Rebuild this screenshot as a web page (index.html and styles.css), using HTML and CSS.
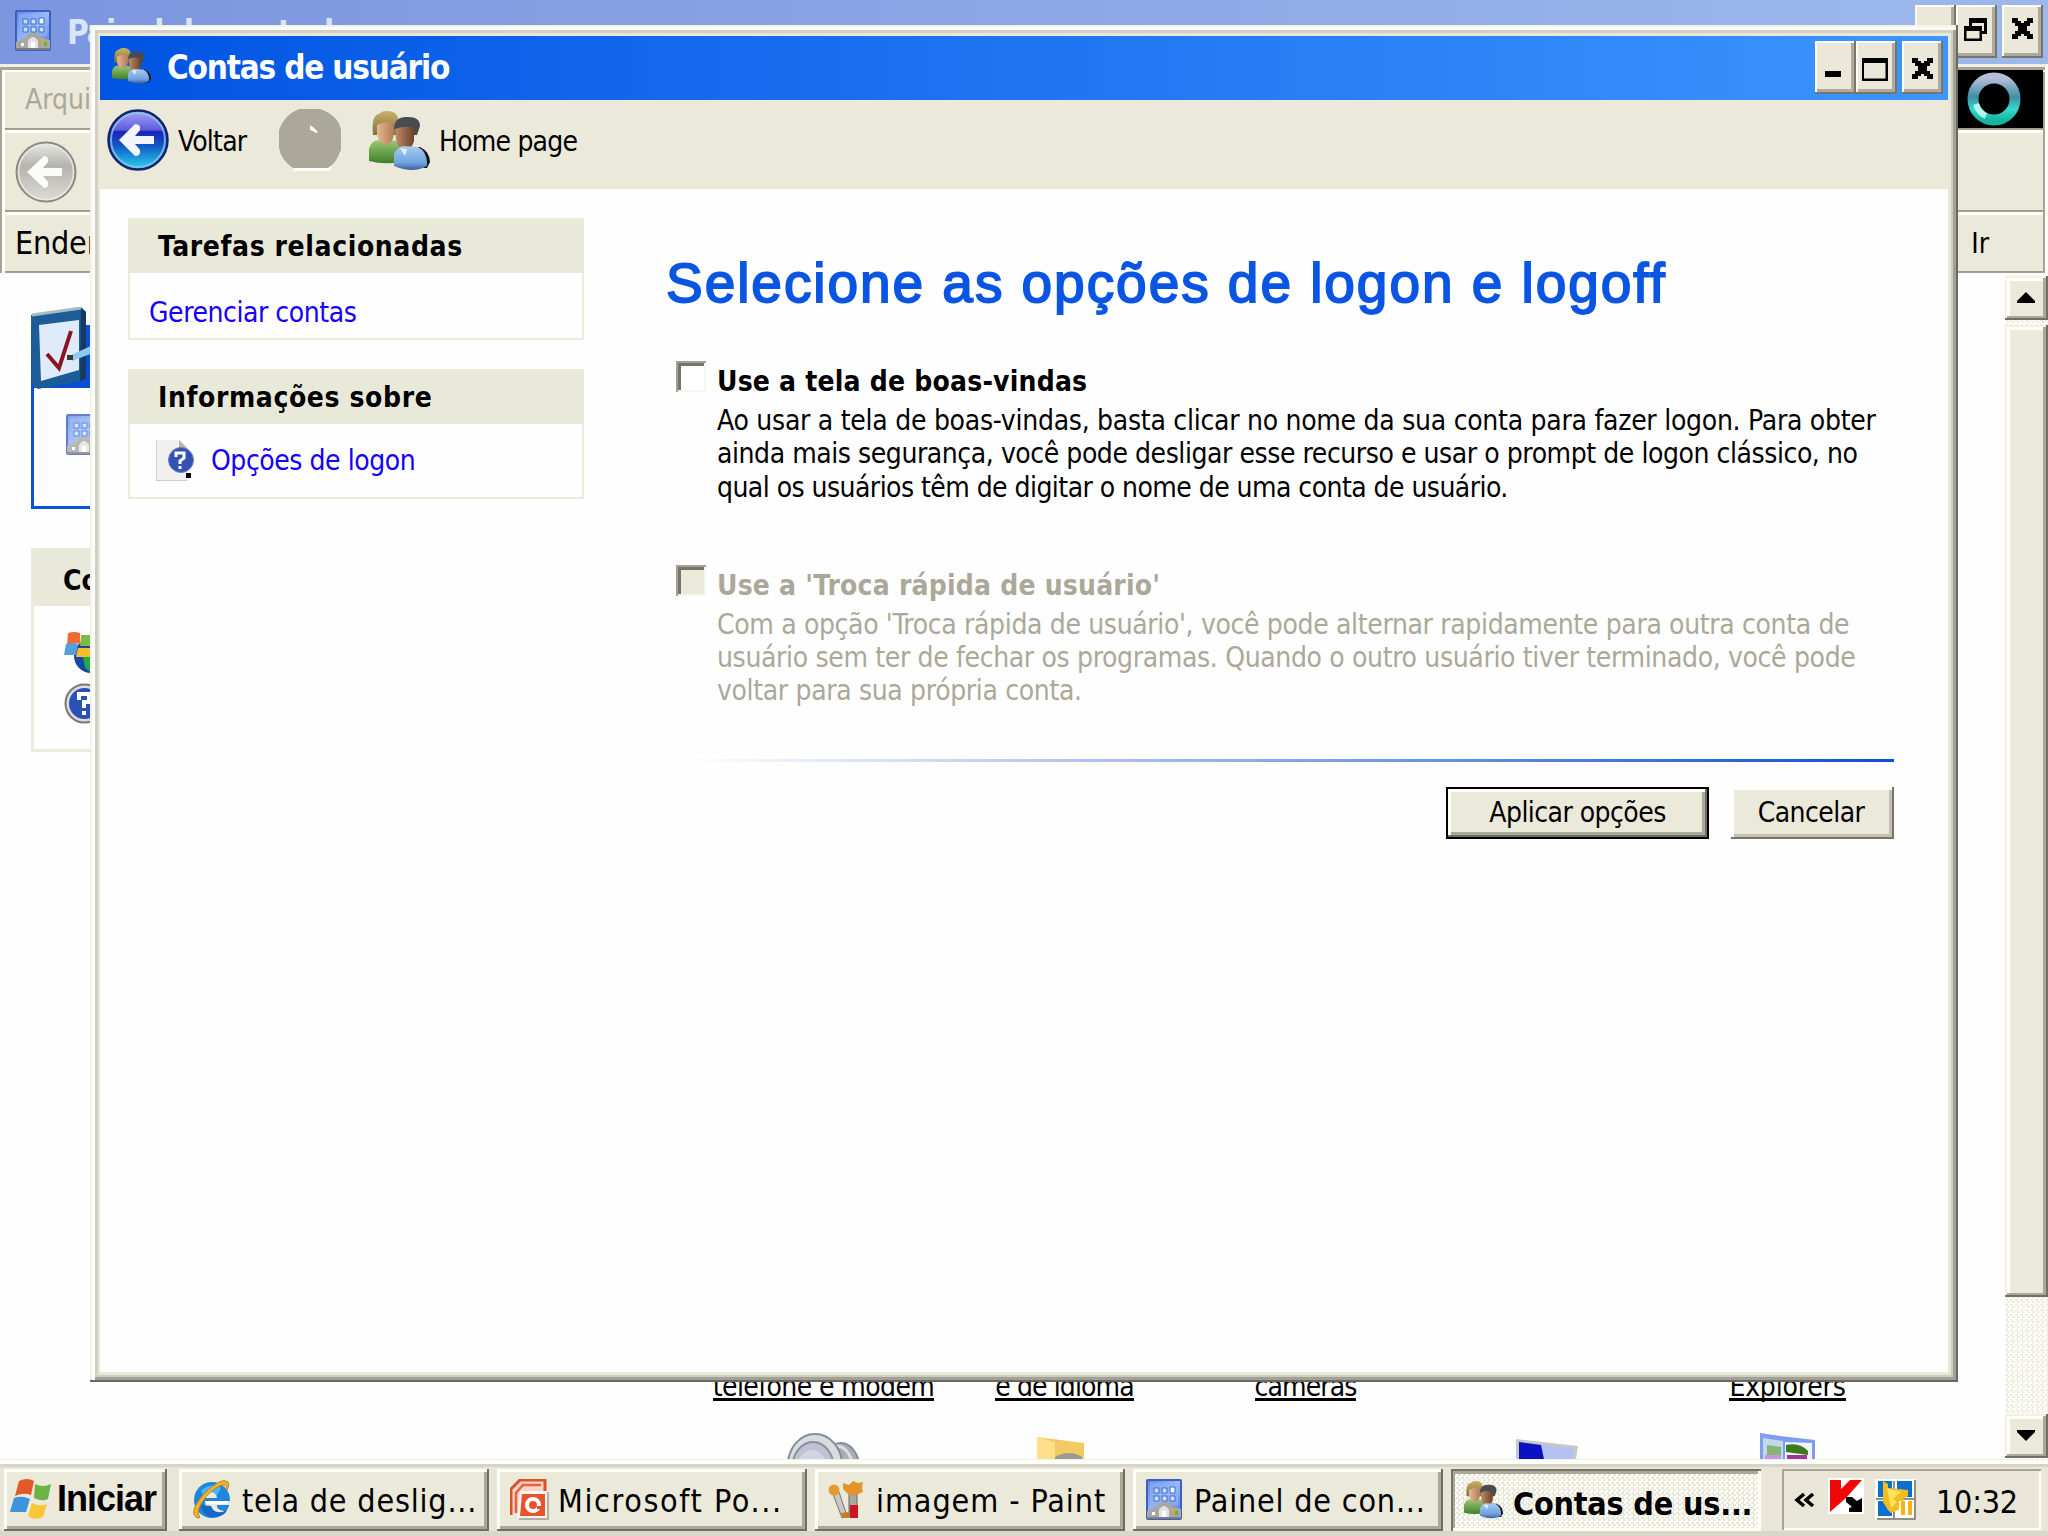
FILE: index.html
```
<!DOCTYPE html>
<html lang="pt-BR">

<head>
    <meta charset="UTF-8">
    <meta name="viewport" content="width=device-width, initial-scale=1.0">
    <title>Contas de usuário</title>
    <link rel="stylesheet" href="styles.css">
</head>

<body>
    <!-- shared icons -->
    <svg class="defs">
        <defs>
            <linearGradient id="backBlue" x1="0" y1="0" x2="0" y2="1">
                <stop offset="0" stop-color="#a9a6f5"/>
                <stop offset=".33" stop-color="#5a5ce0"/>
                <stop offset=".36" stop-color="#1b22b8"/>
                <stop offset=".6" stop-color="#1259c4"/>
                <stop offset="1" stop-color="#2cd6f2"/>
            </linearGradient>
            <linearGradient id="backGray" x1="0" y1="0" x2="0" y2="1">
                <stop offset="0" stop-color="#e9e9e4"/>
                <stop offset=".4" stop-color="#b4b3ae"/>
                <stop offset="1" stop-color="#dedcd6"/>
            </linearGradient>
            <linearGradient id="panelBlue" x1="0" y1="0" x2="1" y2="1">
                <stop offset="0" stop-color="#5b86e6"/>
                <stop offset=".5" stop-color="#9fbcf6"/>
                <stop offset="1" stop-color="#4a72d8"/>
            </linearGradient>
            <linearGradient id="ring" x1="0" y1="0" x2="0" y2="1">
                <stop offset="0" stop-color="#b4bfd8"/>
                <stop offset=".45" stop-color="#3f8fa5"/>
                <stop offset=".75" stop-color="#35d8cf"/>
                <stop offset="1" stop-color="#16b5a0"/>
            </linearGradient>
            <linearGradient id="green" x1="0" y1="0" x2="0" y2="1">
                <stop offset="0" stop-color="#9cc873"/>
                <stop offset="1" stop-color="#3f7f2a"/>
            </linearGradient>
            <linearGradient id="shirt" x1="0" y1="0" x2="0" y2="1">
                <stop offset="0" stop-color="#a9cbf2"/>
                <stop offset=".7" stop-color="#6fa3e0"/>
                <stop offset="1" stop-color="#3d5f96"/>
            </linearGradient>
            <linearGradient id="skin1"><stop offset="0" stop-color="#e5b894"/><stop offset="1" stop-color="#b27a56"/></linearGradient>
            <linearGradient id="skin2"><stop offset="0" stop-color="#c08e6a"/><stop offset="1" stop-color="#6d4128"/></linearGradient>
            <linearGradient id="blond" x1="0" y1="0" x2="0" y2="1"><stop offset="0" stop-color="#c9b06a"/><stop offset="1" stop-color="#857138"/></linearGradient>
        </defs>

        <symbol id="users" viewBox="0 0 61 60" preserveAspectRatio="none">
            <path d="M34 36h17q10 5 10 15l-3 6H48z" fill="#111"/>
            <path d="M4 24Q2 4 10 3q2-3 8-3 10 0 11 8v16z" fill="url(#blond)"/>
            <path d="M8 14q9-5 17-1v10q-2 12-8 12T8 24z" fill="url(#skin1)"/>
            <path d="M0 50V38q2-8 9-9l8 5 8-5 6 5v17q-16 3-31-1z" fill="url(#green)"/>
            <path d="M25 17Q26 5 39 6q12 0 12 9l-3 9H27z" fill="#474b52"/>
            <path d="M26 18q10-4 19-1v13q-3 10-9 10-8-3-9-11z" fill="url(#skin2)"/>
            <path d="M25 55V43q4-8 10-8l14 1q10 5 9 19-14 8-33 0z" fill="url(#shirt)"/>
            <path d="M31 37l5 8 2-7z" fill="#e4effb"/>
        </symbol>

        <symbol id="panel" viewBox="0 0 36 41" preserveAspectRatio="none">
            <rect x="1" y="1" width="34" height="39" rx="1" fill="url(#panelBlue)" stroke="#3d5fc4" stroke-width="2"/>
            <path d="M4 4h28v22H4z" fill="#8fb0f5" opacity=".6"/>
            <g stroke="#3f68d0" stroke-width="1">
                <path d="M8 9h5v5H8zM16 9h5v5h-5zM8 17h5v5H8zM16 17h5v5h-5zM24 17h5v5h-5z" fill="#c4e2fb"/>
                <path d="M24 8h5v6h-5z" fill="#e8fdff"/>
            </g>
            <path d="M1 32l9-5 4-4h9l4 5 8 2v10H1z" fill="#a7a8a6"/>
            <path d="M13 31q5-8 10 0v7H13z" fill="#e4e3e0"/>
            <path d="M6 33h3v3H6zM16 32h4v6h-4z" fill="#fff"/>
            <path d="M26 30h3v4h-3z" fill="#f3a324"/>
            <path d="M29 32h3v4h-3z" fill="#59b845"/>
            <path d="M1 39h34" stroke="#7b7d82" stroke-width="2"/>
        </symbol>

        <symbol id="flag" viewBox="0 0 41 40" preserveAspectRatio="none">
            <path d="M9 2q8-4 15 0l-3 14q-7-3-16 1z" fill="#df5a26"/>
            <path d="M25 5q8 4 16 0l-3 15q-6 3-14-1z" fill="#6cb245"/>
            <path d="M4 19q8-3 16 1l-4 13H0z" fill="#3d93dc"/>
            <path d="M22 24q8 4 15 1l-4 13q-8 4-15-1z" fill="#fcc536"/>
        </symbol>

        <symbol id="check-x" viewBox="0 0 21 21" preserveAspectRatio="none">
            <path d="M0 0h6v3h3v2h3V3h3V0h6v5h-3v3h-3v5h3v3h3v5h-6v-3h-3v-2H9v2H6v3H0v-5h3v-3h3V8H3V5H0z"/>
        </symbol>
    </svg>

    <!-- window behind -->
    <div class="explorer">
        <div class="explorer-title">
            <svg class="explorer-icon"><use href="#panel"/></svg>
            <span class="explorer-name">Painel de controle</span>
            <div class="caption-buttons">
                <div class="caption-btn"></div>
                <div class="caption-btn">
                    <svg width="23" height="23" viewBox="0 0 23 23"><path d="M0 8h18v15H0zM5 0h18v16h-5v-3h2V5H8v3H5z"/><path d="M2.500 13h13v7.500h-13z" fill="#ece9d8"/></svg>
                </div>
                <div class="caption-btn close"><svg width="21" height="21"><use href="#check-x"/></svg></div>
            </div>
        </div>
        <div class="bars">
            <div class="bar menu-bar"><span>Arquivo</span><div class="throbber"><svg width="56" height="56" viewBox="0 0 56 56"><circle cx="28" cy="28" r="21" fill="none" stroke="url(#ring)" stroke-width="11"/><path d="M10 33q3 9 10 12" stroke="#d5fff6" stroke-width="6" fill="none" opacity=".8"/></svg></div></div>
            <div class="bar nav-bar">
                <svg width="62" height="62" viewBox="0 0 62 62"><circle cx="31" cy="31" r="29.500" fill="url(#backGray)" stroke="#8a8a84" stroke-width="2"/><circle cx="31" cy="31" r="27.500" fill="none" stroke="#e8e8e3" stroke-width="1.500"/><path d="M12 31l17-16q5 0 4 6l-5 6h19v8H28l5 6q1 6-4 6z" fill="#fbfbfa"/></svg>
            </div>
            <div class="bar address-bar"><span>Endereço</span><span class="go">Ir</span></div>
        </div>
        <div class="explorer-body">
            <div class="explorer-side">
                <div class="side-box blue">
                    <div class="side-head">
                        <svg class="side-badge" width="62" height="82" viewBox="0 0 62 82">
                            <path d="M0 8L50 0l5 5v68L7 82l-6-4z" fill="#1d5c96"/>
                            <path d="M1 8L50 1" stroke="#a9bcc6" stroke-width="3"/>
                            <path d="M50 1l5 4v67l-6 2z" fill="#173a63"/>
                            <path d="M8 18l40-5v50L10 74z" fill="#dfebfb"/>
                            <path d="M16 47l12 14L40 24" stroke="#8c1320" stroke-width="4" fill="none"/>
                            <path d="M36 50l26-12v8L41 54z" fill="#8ccaf3"/>
                            <path d="M36 48h6v5h-6z" fill="#3d3b1c"/>
                        </svg>
                    </div>
                    <svg class="side-icon" width="36" height="41"><use href="#panel"/></svg>
                </div>
                <div class="side-box">
                    <div class="side-head">Consulte também</div>
                    <div class="side-links">
                        <svg width="40" height="41" viewBox="0 0 40 41">
                            <circle cx="27" cy="24" r="17" fill="#1747a8"/>
                            <path d="M19 25h12v16q-7-1-10-6z" fill="#1fae3a"/>
                            <path d="M4 1q6-2 12 0v11q-6-2-13 1z" fill="#ee6b35"/>
                            <path d="M17 3h14v11H16z" fill="#7cbb48"/>
                            <path d="M2 12q6-2 12 0l-2 11H0z" fill="#569fdf"/>
                            <path d="M14 16h16v9H12z" fill="#f4bd2b"/>
                        </svg>
                        <svg width="41" height="41" viewBox="0 0 41 41"><circle cx="20.500" cy="20.500" r="19" fill="#dcdcda" stroke="#77777a" stroke-width="2"/><circle cx="20.500" cy="20.500" r="15.500" fill="#2b50b8"/><path d="M15 17v-6h10v8h-5v6M20 28v4" stroke="#fff" stroke-width="4" fill="none"/></svg>
                    </div>
                </div>
            </div>
            <div class="explorer-main">
                <div class="items">
                    <div class="item"><a>telefone e modem</a></div>
                    <div class="item"><a class="tight">e de idioma</a></div>
                    <div class="item"><a class="tight">câmeras</a></div>
                    <div class="item"></div>
                    <div class="item"><a class="loose">Explorers</a></div>
                </div>
                <div class="items item-icons">
                    <div class="item"><svg width="74" height="26" viewBox="0 0 74 26"><ellipse cx="54" cy="38" rx="19" ry="28" fill="#a9aeb5" stroke="#888e96" stroke-width="2"/><ellipse cx="50" cy="38" rx="16" ry="25" fill="none" stroke="#d9dde1" stroke-width="3"/><ellipse cx="28" cy="32" rx="27" ry="31" fill="#d9dde2" stroke="#868c94" stroke-width="2"/><ellipse cx="26" cy="36" rx="21" ry="27" fill="#bfc2d2" stroke="#8b9199" stroke-width="2"/><ellipse cx="25" cy="40" rx="16" ry="23" fill="#d3d5e2"/></svg></div>
                    <div class="item"><svg class="folder" width="52" height="26" viewBox="0 0 52 26"><path d="M2 4l47 6v20H2z" fill="#f3c964"/><path d="M2 4l18 5v21H2z" fill="#ffe08a"/><path d="M20 24q14-8 27 0v5H20z" fill="#9a9a94"/></svg></div>
                    <div class="item"></div>
                    <div class="item"><svg width="62" height="26" viewBox="0 0 62 26"><path d="M0 6l62 7-2 13H0z" fill="#c9c9c2"/><path d="M3 9l55 6-1 11H3z" fill="#b5c1f2"/><path d="M3 9l22 3 3 14H3z" fill="#0a12c4"/></svg></div>
                    <div class="item"><svg width="58" height="26" viewBox="0 0 58 26"><path d="M1 0l20 3 35 4v19H1z" fill="#7f9cf0"/><path d="M4 5l20 3v18H4z" fill="#bfd8ea"/><path d="M8 12l14 2v8H8z" fill="#86b573"/><path d="M26 9l27 1v16H26z" fill="#eef4fb"/><path d="M27 12q14-3 22 6v4l-22-3z" fill="#3c7a1c"/><path d="M28 22h20v4H28z" fill="#a0359a"/><path d="M6 22h16v4H6z" fill="#c894e4"/></svg></div>
                </div>
            </div>
            <div class="scrollbar">
                <div class="scroll-btn up"><svg width="18" height="11" viewBox="0 0 18 11"><path d="M9 0l9 9v2H0V9z"/></svg></div>
                <div class="scroll-thumb"></div>
                <div class="scroll-btn down"><svg width="18" height="11" viewBox="0 0 18 11"><path d="M9 11l9-9V0H0v2z"/></svg></div>
            </div>
        </div>
    </div>

    <!-- taskbar -->
    <div class="taskbar">
        <div class="task start"><svg width="41" height="40"><use href="#flag"/></svg><span>Iniciar</span></div>
        <div class="task">
            <svg width="39" height="41" viewBox="0 0 39 41"><circle cx="20" cy="21" r="18" fill="#1f86e0"/><path d="M9 12q9-9 20-3l-5 9H12z" fill="#4db4f6"/><path d="M13 22h25v4H25q-1 6 11 6l-6 5q-17-1-17-15z" fill="#eceadb"/><path d="M13 22h22v3H14z" fill="#fff"/><path d="M12 19h13q-1-6-7-6t-6 6z" fill="#eceadb"/><path d="M9 26q2 13 14 12 10-1 12-7-12 6-16-4z" fill="#1668c8"/><path d="M5 39Q-4 33 12 15 30-3 36 3q2 3-1 8 0-6-5-5Q18 10 9 25q-5 9-1 13z" fill="#f0b429" stroke="#c08415"/></svg>
            <span class="tela">tela de deslig...</span>
        </div>
        <div class="task">
            <svg width="39" height="41" viewBox="0 0 39 41"><path d="M1 36V10l9-9h25v30" fill="#f6d5c8" stroke="#dd5222" stroke-width="3"/><path d="M6 34V14l7-8h18" fill="none" stroke="#e5643c" stroke-width="2.500"/><path d="M10 12h28v28H7z" fill="#fbf4f0"/><path d="M12 15h23v22H10z" fill="#e4552c"/><circle cx="23" cy="26" r="6" fill="none" stroke="#fff" stroke-width="4"/><path d="M27 27h6v3h-6z" fill="#e4552c"/><path d="M38 13v27H9" fill="none" stroke="#b5aca6" stroke-width="2"/></svg>
            <span class="wide">Microsoft Po...</span>
        </div>
        <div class="task">
            <svg width="39" height="41" viewBox="0 0 39 41"><path d="M5 15l6-2 8 24-5 2z" fill="#c8c8c4" stroke="#77746a"/><path d="M21 14h8v24h-8z" fill="#a9a9a4" stroke="#66645d"/><circle cx="6" cy="11" r="5.500" fill="#e39a2f"/><path d="M15 4l6 2 4-4 5 2 5-1-1 6 1 4-7 3h-7l-6-6z" fill="#e2952c"/><path d="M22 26h8v13h-8z" fill="#d0141f"/><path d="M13 34l8-1v6h-6z" fill="#cf7a1e"/></svg>
            <span class="paint">imagem - Paint</span>
        </div>
        <div class="task"><svg width="36" height="41"><use href="#panel"/></svg><span class="panel-name">Painel de con...</span></div>
        <div class="task active"><svg width="39" height="38"><use href="#users"/></svg><span>Contas de us...</span></div>
        <div class="tray">
            <svg width="21" height="14" viewBox="0 0 21 14"><path d="M10 1L3 7l7 6M19 1l-7 6 7 6" fill="none" stroke="#000" stroke-width="3.500"/></svg>
            <svg class="kav" width="36" height="36" viewBox="0 0 36 36"><path d="M0 0h36v36H0z" fill="#fff"/><path d="M2 2h11v9l9-9h12L18 20 2 34z" fill="#f00808"/><path d="M18 19h6l5 4 5-3v14H21v-4l3-1-6-5z"/></svg>
            <svg class="net" width="41" height="41" viewBox="0 0 41 41"><path d="M0 0h41v41H0z" fill="#fff"/><path d="M3 2h14v16H3zM22 2h15v16H22zM3 22h14v15H3z" fill="#0b6fd0"/><path d="M40 1v39H2M19 2v37M1 20h38" fill="none" stroke="#6b6a62" stroke-width="1.500"/><path d="M8 2l5 3v4l20 2v6l-5 3v9l-12 5-3-3-5-8z" fill="#f2bd1d"/><path d="M12 9l14 4-8 7 4 3-6 6z" fill="#ffe25e"/><path d="M24 22h14v17H24z" fill="#fff"/><path d="M26 22h4v14h-4zM33 22h4v14h-4z" fill="#fbb110"/></svg>
            <span>10:32</span>
        </div>
    </div>

    <!-- user accounts dialog -->
    <div class="dialog">
        <div class="dialog-title">
            <svg width="39" height="36"><use href="#users"/></svg>
            <h1>Contas de usuário</h1>
            <div class="caption-buttons">
                <div class="caption-btn min"><svg width="16" height="6"><path d="M0 0h16v6H0z"/></svg></div>
                <div class="caption-btn"><svg width="26" height="23" viewBox="0 0 26 23"><path d="M0 0h26v23H0zM2 5v15.500h21.500V5z" fill-rule="evenodd"/></svg></div>
                <div class="caption-btn close"><svg width="21" height="21"><use href="#check-x"/></svg></div>
            </div>
        </div>
        <div class="dialog-toolbar">
            <svg width="62" height="62" viewBox="0 0 62 62"><circle cx="31" cy="31" r="29.500" fill="url(#backBlue)" stroke="#12256b" stroke-width="2.500"/><circle cx="31" cy="31" r="27" fill="none" stroke="#8fc4ee" stroke-width="2" opacity=".8"/><path d="M12 31l16-16q6 0 5 6l-5 6h19v8H28l5 6q1 6-5 6z" fill="#f4f4fd"/></svg>
            <span class="back">Voltar</span>
            <svg class="forward" width="65" height="62" viewBox="0 0 65 62"><path d="M20 3h22l20 16v25L50 62H14L22 50z" fill="#fff"/><path d="M20 0h21q19 7 21 21v20q-5 14-13 18H14Q2 51 0 39V21Q5 6 20 0z" fill="#aca899"/><path d="M31 16l4 3 4 4-2 1-3-2-3-1z" fill="#fff"/></svg>
            <svg class="home" width="61" height="60"><use href="#users"/></svg>
            <span class="home-name">Home page</span>
        </div>
        <div class="dialog-body">
            <div class="tasks">
                <div class="task-box">
                    <h3>Tarefas relacionadas</h3>
                    <div class="task-link"><a>Gerenciar contas</a></div>
                </div>
                <div class="task-box about">
                    <h3>Informações sobre</h3>
                    <div class="task-link">
                        <svg width="38" height="41" viewBox="0 0 38 41"><path d="M0 0h24l8 8v33H0z" fill="#f1f0ef"/><path d="M0 0v41h31" fill="none" stroke="#c4c2c0" stroke-width="1.500"/><path d="M23 0l9 9h-9z" fill="#b5b3b1"/><path d="M30 33h5v5h-5z"/><circle cx="25" cy="20" r="12.500" fill="#3352b4" stroke="#6b7fc0"/><path d="M20 17v-4h8v5l-4 3v3M24 26v3" stroke="#fff" stroke-width="3" fill="none"/></svg>
                        <a>Opções de logon</a>
                    </div>
                </div>
            </div>
            <div class="content">
                <h2>Selecione as opções de logon e logoff</h2>
                <div class="option">
                    <div class="checkbox"></div>
                    <div class="option-text">
                        <h4>Use a tela de boas-vindas</h4>
                        <p>
                            <span>Ao usar a tela de boas-vindas, basta clicar no nome da sua conta para fazer logon. Para obter</span><br>
                            <span class="narrow">ainda mais segurança, você pode desligar esse recurso e usar o prompt de logon clássico, no</span><br>
                            <span class="narrower">qual os usuários têm de digitar o nome de uma conta de usuário.</span>
                        </p>
                    </div>
                </div>
                <div class="option disabled">
                    <div class="checkbox"></div>
                    <div class="option-text">
                        <h4>Use a 'Troca rápida de usuário'</h4>
                        <p>
                            Com a opção 'Troca rápida de usuário', você pode alternar rapidamente para outra conta de<br>
                            usuário sem ter de fechar os programas. Quando o outro usuário tiver terminado, você pode<br>
                            voltar para sua própria conta.
                        </p>
                    </div>
                </div>
                <div class="divider"></div>
                <div class="buttons">
                    <button class="apply">Aplicar opções</button>
                    <button class="cancel">Cancelar</button>
                </div>
            </div>
        </div>
    </div>
</body>

</html>
```
FILE: styles.css
```
* {
    box-sizing: border-box;
}

body {
    margin: 0;
    width: 2048px;
    height: 1536px;
    overflow: hidden;
    position: relative;
    display: flex;
    flex-direction: column;
    background: #fefefe;
    font-family: "DejaVu Sans Condensed", "DejaVu Sans", sans-serif;
    font-size: 28px;
    color: #000;
}

h1, h2, h3, h4, p {
    margin: 0;
}

svg {
    display: block;
    flex-shrink: 0;
}

span, a {
    white-space: nowrap;
}

.defs {
    position: absolute;
    width: 0;
    height: 0;
}

/* caption buttons */
.caption-buttons {
    display: flex;
    margin-left: auto;
}

.caption-btn {
    width: 41px;
    height: 53px;
    display: flex;
    align-items: center;
    justify-content: center;
    padding: 0 3px 4px 0;
    background: #ebe8d9;
    box-shadow: inset -2px -2px #77756a, inset 2px 2px #fffffa, inset -5px -5px #aeab9c;
}

.caption-btn.close {
    margin-left: 5px;
    padding: 0 1px 6px 0;
}

.caption-btn.min {
    align-items: flex-end;
    padding: 0 5px 17px 0;
}

/* explorer window */
.explorer {
    height: 1459px;
    display: flex;
    flex-direction: column;
    overflow: hidden;
}

.explorer-title {
    height: 64px;
    flex-shrink: 0;
    display: flex;
    align-items: flex-start;
    padding: 5px 5px 0 15px;
    background: linear-gradient(to right, #7b95df, #9db9eb);
}

.explorer-icon {
    width: 36px;
    height: 41px;
    margin-top: 5px;
}

.explorer-name {
    margin: 7px 0 0 16px;
    font-size: 33px;
    font-weight: bold;
    line-height: 42px;
    letter-spacing: -1px;
    color: #d8e4f8;
}

.bars {
    height: 209px;
    flex-shrink: 0;
    border-top: 3px solid #f1efe4;
    border-right: 3px solid #fffffa;
    background: #ebe9da;
    box-shadow: inset 2px 3px #a7a497, inset 5px 5px #fffffa, inset -2px 0 #a7a497;
    padding: 3px 2px 0 5px;
}

.bar {
    display: flex;
    align-items: center;
    border-bottom: 2px solid #a09e91;
}

.menu-bar {
    height: 60px;
    padding: 1px 0 0 20px;
    color: #aca899;
}

.throbber {
    width: 87px;
    height: 58px;
    margin: -1px 0 0 auto;
    background: #000;
    padding: 1px 0 0 10px;
}

.nav-bar {
    height: 82px;
    border-top: 3px solid #fffffa;
    padding-left: 10px;
}

.address-bar {
    height: 61px;
    border-top: 3px solid #fffffa;
    padding-left: 10px;
    font-size: 32px;
    letter-spacing: -.2px;
}

.address-bar .go {
    margin: 1px 54px 0 auto;
    font-size: 28px;
    letter-spacing: 0;
}

.explorer-body {
    flex: 1;
    display: flex;
    padding-top: 3px;
}

.explorer-side {
    width: 430px;
    padding: 49px 0 0 31px;
}

.side-box {
    height: 204px;
    border: 3px solid #ebebdb;
    border-top: none;
    margin-bottom: 39px;
}

.side-box.blue {
    height: 184px;
    border-color: #0a52d8;
}

.side-head {
    height: 58px;
    padding: 8px 0 0 29px;
    background: #e9e9da;
    font-weight: bold;
    line-height: 50px;
    white-space: nowrap;
}

.blue .side-head {
    height: 63px;
    padding: 0;
    background: #0a4fd2;
}

.side-badge {
    position: relative;
    top: -18px;
    left: -3px;
}

.side-icon {
    margin: 26px 0 0 32px;
    opacity: .8;
}

.side-links {
    padding: 26px 0 0 30px;
    display: flex;
    flex-direction: column;
    gap: 10px;
}

.explorer-main {
    flex: 1;
    display: flex;
    flex-direction: column;
    justify-content: flex-end;
    padding-left: 273px;
}

.items {
    display: grid;
    grid-template-columns: repeat(5, 241px);
    height: 34px;
    margin-bottom: 30px;
}

.item {
    display: flex;
    justify-content: center;
    line-height: 36px;
    letter-spacing: -.6px;
}

.item a {
    height: 32px;
    border-bottom: 3px solid #000;
}

.item .tight {
    letter-spacing: -.9px;
}

.item .loose {
    letter-spacing: -.2px;
}

.item-icons {
    height: 26px;
    margin-bottom: 0;
}

.folder {
    margin-right: 8px;
}

.scrollbar {
    width: 43px;
    display: flex;
    flex-direction: column;
    background: repeating-conic-gradient(#efeee4 0 25%, #fffffc 0 50%) 0 0 / 5px 5px;
}

.scroll-btn,
.scroll-thumb {
    background: #ebe9da;
    box-shadow: inset -2px -2px #716f64, inset 2px 2px #f3f1e6, inset -5px -4px #aca899, inset 5px 5px #fffffa;
}

.scroll-btn {
    height: 44px;
    display: flex;
    align-items: center;
    justify-content: center;
    padding: 0 1px 1px 0;
}

.scroll-thumb {
    height: 972px;
    margin-top: 5px;
}

.scroll-btn.down {
    margin: auto 0 1px;
}

/* taskbar */
.taskbar {
    height: 77px;
    display: flex;
    align-items: flex-start;
    gap: 8px;
    padding: 10px 7px 0 4px;
    background: #e9e6d8;
    box-shadow: inset 0 1px #f0efe8, inset 0 5px #fffffa, inset 0 8px #d6d4c6, inset 0 -5px #d9d7c8;
}

.task {
    width: 310px;
    height: 62px;
    display: flex;
    align-items: center;
    padding: 0 0 2px 13px;
    background: #ebe9da;
    box-shadow: inset -2px -2px #716f64, inset 3px 3px #fffffa, inset -5px -5px #aca899;
    font-size: 32px;
    letter-spacing: .8px;
}

.task span {
    margin: 4px 0 0 auto;
    width: 249px;
}

.task .tela {
    width: 247px;
}

.task .wide {
    letter-spacing: 1.600px;
}

.task .paint {
    letter-spacing: .9px;
}

.task.start {
    width: 163px;
    margin-right: 4px;
    padding-left: 6px;
    font-family: "Liberation Sans", sans-serif;
    font-size: 36px;
    font-weight: bold;
    letter-spacing: -1px;
}

.task.start span {
    width: 110px;
    margin-top: 0;
}

.task.active {
    font-weight: bold;
    letter-spacing: -.2px;
    background: repeating-conic-gradient(#e9e7da 0 25%, #fffffa 0 50%) 0 0 / 5px 5px;
    box-shadow: inset 2px 2px #77756a, inset -3px -3px #fffffa, inset 4px 5px #aca899;
    padding-bottom: 0;
}

.task.active span {
    margin-top: 7px;
    width: 248px;
}

.tray {
    width: 259px;
    height: 61px;
    margin-left: auto;
    padding-left: 12px;
    display: flex;
    align-items: center;
    box-shadow: inset 2px 2px #a7a497, inset -2px -2px #fffffa;
    font-size: 32px;
    letter-spacing: -.2px;
}

.tray .kav {
    margin: -8px 0 0 13px;
}

.tray .net {
    margin-left: 11px;
}

.tray span {
    margin: 4px 0 0 20px;
}

/* dialog window */
.dialog {
    position: absolute;
    left: 90px;
    top: 25px;
    width: 1868px;
    height: 1357px;
    padding: 11px 10px 10px;
    display: flex;
    flex-direction: column;
    background: #e9e7da;
    box-shadow: inset -2px -2px #6b695f, inset 2px 2px #f3f2e9, inset 5px 5px #fffffa, inset -5px -5px #a3a194, inset 8px 8px #d2d0c5, inset -7px -7px #cdccbf;
}

.dialog-title {
    height: 64px;
    flex-shrink: 0;
    display: flex;
    align-items: flex-start;
    padding: 5px 5px 0 12px;
    background: linear-gradient(to right, #0054e3, #3d95ff);
}

.dialog-title svg:first-child {
    margin-top: 7px;
}

.dialog-title h1 {
    margin: 0 0 0 16px;
    font-size: 33px;
    line-height: 54px;
    letter-spacing: -1.200px;
    color: #fff;
}

.dialog-title .min svg {
    margin: 0;
}

.dialog-toolbar {
    height: 89px;
    flex-shrink: 0;
    display: flex;
    align-items: flex-start;
    padding: 9px 0 0 7px;
    background: #ebe9da;
    line-height: 66px;
    letter-spacing: -.8px;
}

.dialog-toolbar .back {
    width: 70px;
    margin-left: 9px;
}

.dialog-toolbar .forward {
    margin-left: 31px;
}

.dialog-toolbar .home {
    margin: 2px 9px 0 25px;
}

.dialog-body {
    flex: 1;
    display: flex;
    background: #fefefe;
    padding: 29px 54px 0 28px;
}

.tasks {
    width: 456px;
    flex-shrink: 0;
}

.task-box {
    height: 122px;
    border: 2px solid #ebebdb;
    margin-bottom: 29px;
}

.task-box.about {
    height: 130px;
}

.task-box h3 {
    height: 53px;
    padding-left: 28px;
    background: #e9e9da;
    font-size: 28px;
    line-height: 54px;
    letter-spacing: .6px;
}

.task-link {
    height: 65px;
    display: flex;
    align-items: center;
    padding: 14px 0 0 19px;
    line-height: 34px;
    letter-spacing: -.45px;
    color: #1400ff;
}

.about .task-link {
    padding: 7px 0 0 26px;
}

.about .task-link a {
    margin: 1px 0 0 17px;
}

.content {
    flex: 1;
    padding: 33px 0 0 82px;
}

.content h2 {
    font-family: "Liberation Sans", sans-serif;
    font-size: 55px;
    font-weight: normal;
    line-height: 64px;
    letter-spacing: 1.950px;
    white-space: nowrap;
    color: #0a55e3;
    -webkit-text-stroke: 1.800px #0a55e3;
}

.option {
    display: flex;
    margin: 46px 0 0 10px;
}

.option.disabled {
    margin-top: 61px;
    color: #aca899;
}

.checkbox {
    width: 30px;
    height: 31px;
    margin-right: 11px;
    flex-shrink: 0;
    background: #fff;
    box-shadow: inset 2px 2px #a3a194, inset -2px -2px #f6f5ee, inset 5px 5px #77756a;
}

.disabled .checkbox {
    background: #ebe9da;
}

.option-text h4 {
    margin-top: 2px;
    font-size: 28px;
    line-height: 37px;
    letter-spacing: .2px;
}

.option-text p {
    margin-top: 4px;
    line-height: 33.300px;
    letter-spacing: -.27px;
    white-space: nowrap;
}

.option-text .narrow {
    letter-spacing: -.44px;
}

.option-text .narrower {
    letter-spacing: -.55px;
}

.disabled p {
    letter-spacing: -.35px;
}

.divider {
    height: 3px;
    margin: 51px 0 0 20px;
    background: linear-gradient(to right, #fefefe, #0a4fd2);
}

.buttons {
    display: flex;
    justify-content: flex-end;
    gap: 22px;
    margin-top: 25px;
}

button {
    height: 52px;
    padding: 0;
    border: none;
    background: #ebe9da;
    font-family: inherit;
    font-size: 28px;
    letter-spacing: -.55px;
    color: #000;
}

.apply {
    width: 263px;
    box-shadow: inset 0 0 0 2px #000, inset -4px -4px #716f64, inset 5px 5px #fffffa, inset -7px -7px #aca899;
}

.cancel {
    width: 163px;
    padding-right: 3px;
    box-shadow: inset -2px -2px #77756a, inset 3px 3px #fffffa, inset -5px -5px #c4c1b2;
}
```
